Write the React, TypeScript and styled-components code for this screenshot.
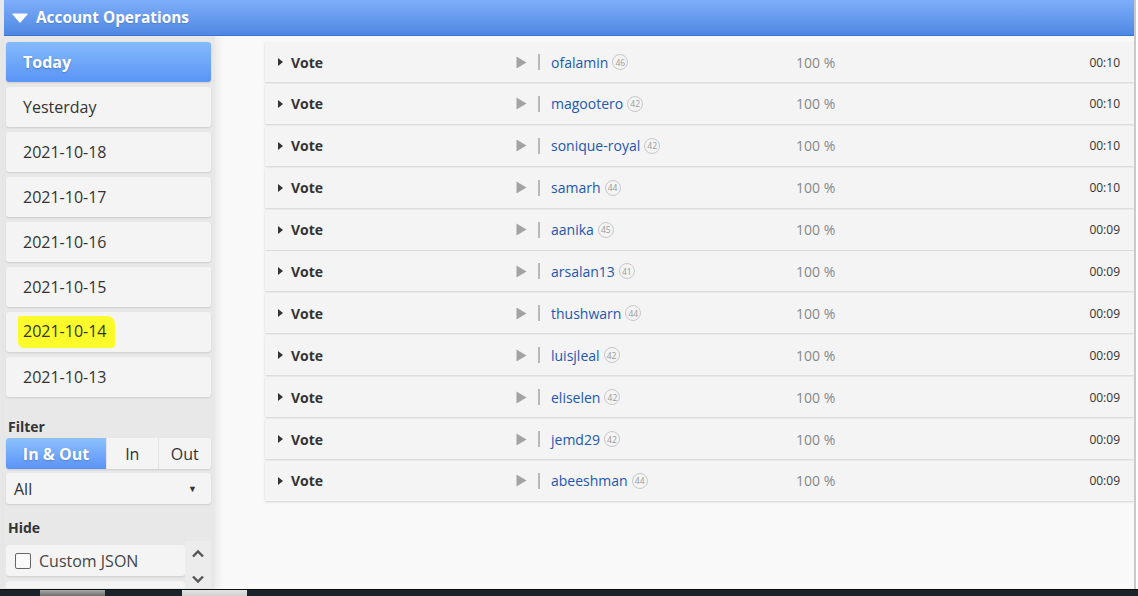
import React from 'react';
import styled, {createGlobalStyle} from "styled-components";

const GlobalStyle = createGlobalStyle`
  html, body {
    margin: 0;
    padding: 0;
    background: #ffffff;
    font-family: "Open Sans", "Liberation Sans", sans-serif;
    overflow: hidden;
  }
`

const Screen = styled.div`
  display: flex;
  flex-direction: column;
  height: 596px;
  width: 1138px;
`

const Window = styled.div`
  flex: 1;
  display: flex;
  flex-direction: column;
  width: 1130px;
  padding-left: 4px;
  background: #e8e8e8;
  border-right: 2px solid #c9c9c9;
  overflow: hidden;
`

const Header = styled.div`
  height: 35px;
  flex-shrink: 0;
  display: flex;
  align-items: center;
  gap: 8px;
  padding-left: 8px;
  background: linear-gradient(#7eaefb, #4f88e2);
  border-bottom: 1px solid #3b72d2;
  color: #fff;
  font-size: 15.4px;
  font-weight: 700;
  text-shadow: 0 1px 1px rgba(0, 0, 0, 0.15);
  position: relative;
  z-index: 2;
`

const Body = styled.div`
  flex: 1;
  display: flex;
  min-height: 0;
`

const Sidebar = styled.div`
  width: 205px;
  padding: 6px 4px 0 2px;
  display: flex;
  flex-direction: column;
  background: #e8e8e8;
  box-shadow: 3px 0 8px rgba(0, 0, 0, 0.07);
  position: relative;
  z-index: 1;
  & > * {
    flex-shrink: 0;
  }
`

const DayButton = styled.div<{ $active?: boolean }>`
  height: 40px;
  margin-bottom: 5px;
  display: flex;
  align-items: center;
  padding-left: 17px;
  border-radius: 3px;
  font-size: 16px;
  background: ${p => p.$active ? "linear-gradient(#85bbfc, #5a94f6)" : "#f4f4f4"};
  color: ${p => p.$active ? "#fff" : "#333"};
  font-weight: ${p => p.$active ? 700 : 400};
  text-shadow: ${p => p.$active ? "0 1px 2px rgba(0,0,0,0.25)" : "none"};
  box-shadow: 0 1px 2px rgba(0, 0, 0, 0.12);
`

const Marker = styled.span`
  background: #fbfb2c;
  padding: 4px 9px 6px 5px;
  margin-left: -5px;
  border-radius: 2px 8px 4px 6px;
`

const Label = styled.div<{ $top: number }>`
  margin-top: ${p => p.$top}px;
  padding-left: 2px;
  font-size: 14px;
  font-weight: 700;
  color: #333;
  height: 18px;
`

const Segmented = styled.div`
  margin-top: 3px;
  display: flex;
  height: 31px;
  border-radius: 3px;
  box-shadow: 0 1px 2px rgba(0, 0, 0, 0.12);
  overflow: hidden;
`

const Segment = styled.div<{ $active?: boolean; $w: number }>`
  width: ${p => p.$w}px;
  display: flex;
  align-items: center;
  justify-content: center;
  font-size: 16px;
  background: ${p => p.$active ? "linear-gradient(#8dc2fd, #5a92f7)" : "#f4f4f4"};
  color: ${p => p.$active ? "#fff" : "#333"};
  font-weight: ${p => p.$active ? 700 : 400};
  text-shadow: ${p => p.$active ? "0 1px 2px rgba(0,0,0,0.2)" : "none"};
  & + & {
    border-left: 1px solid #e2e2e2;
  }
`

const Select = styled.div`
  margin-top: 4px;
  height: 31px;
  display: flex;
  align-items: center;
  justify-content: space-between;
  padding: 0 14px 0 8px;
  background: #f4f4f4;
  border-radius: 3px;
  box-shadow: 0 1px 2px rgba(0, 0, 0, 0.12);
  font-size: 16px;
  color: #333;
`

const Caret = styled.span`
  font-size: 9px;
  color: #333;
`

const HideList = styled.div`
  margin-top: 5px;
  display: flex;
  height: 47px;
  overflow: hidden;
`

const HideItems = styled.div`
  width: 179px;
  padding-top: 4px;
  display: flex;
  flex-direction: column;
  gap: 5px;
`

const CheckRow = styled.div`
  height: 31px;
  flex-shrink: 0;
  display: flex;
  align-items: center;
  gap: 8px;
  padding-left: 9px;
  background: #f4f4f4;
  border-radius: 3px;
  box-shadow: 0 1px 2px rgba(0, 0, 0, 0.12);
  font-size: 16px;
  color: #444;
`

const Box = styled.span`
  width: 14px;
  height: 14px;
  border: 1.5px solid #666;
  border-radius: 2px;
  background: #fafafa;
`

const Scroller = styled.div`
  width: 26px;
  display: flex;
  flex-direction: column;
  align-items: center;
  justify-content: space-between;
  padding: 8px 0 4px;
  background: #ececec;
  color: #555;
`

const Main = styled.div`
  flex: 1;
  padding: 6px 0 0 50px;
  background: #f9f9f9;
  display: flex;
  flex-direction: column;
`

const OpRow = styled.div`
  height: 40px;
  flex-shrink: 0;
  margin-bottom: 1.9px;
  display: flex;
  align-items: center;
  background: #f4f4f4;
  box-shadow: 0 1px 2px rgba(0, 0, 0, 0.16);
  color: #333;
  font-size: 14px;
`

const Expand = styled.span`
  width: 12px;
  margin-left: 13px;
  display: flex;
  align-items: center;
`

const OpType = styled.span`
  width: 225px;
  padding-left: 1px;
  font-weight: 700;
  color: #333;
`

const Play = styled.span`
  width: 22px;
  display: flex;
  align-items: center;
`

const Pipe = styled.span`
  width: 2px;
  height: 16px;
  background: #b9b9b9;
  margin-right: 11px;
`

const Account = styled.span`
  width: 245px;
  display: flex;
  align-items: center;
  gap: 4px;
`

const Name = styled.span`
  color: #2257b0;
`

const Rep = styled.span`
  width: 14px;
  height: 14px;
  border: 1px solid #c8c8c8;
  border-radius: 50%;
  font-size: 8.5px;
  color: #999;
  display: flex;
  align-items: center;
  justify-content: center;
`

const Weight = styled.span`
  flex: 1;
  color: #888;
`

const Time = styled.span`
  font-size: 12px;
  color: #333;
  padding-right: 14px;
`

const Taskbar = styled.div`
  height: 6px;
  display: flex;
  background: #1c222b;
  border-top: 1px solid #0b0d10;
`

const TaskItem = styled.div<{ $w: number; $light?: boolean; $lit?: boolean }>`
  width: ${p => p.$w}px;
  margin-right: 2px;
  background: ${p => p.$lit ? "linear-gradient(#e4e4e4, #cfcfcf)" : p.$light ? "linear-gradient(#a8a8a8, #6e6e6e)" : "transparent"};
`

const days = ["Yesterday", "2021-10-18", "2021-10-17", "2021-10-16", "2021-10-15", "2021-10-14", "2021-10-13"]

const ops = [
    {name: "ofalamin", rep: 46, time: "00:10"},
    {name: "magootero", rep: 42, time: "00:10"},
    {name: "sonique-royal", rep: 42, time: "00:10"},
    {name: "samarh", rep: 44, time: "00:10"},
    {name: "aanika", rep: 45, time: "00:09"},
    {name: "arsalan13", rep: 41, time: "00:09"},
    {name: "thushwarn", rep: 44, time: "00:09"},
    {name: "luisjleal", rep: 42, time: "00:09"},
    {name: "eliselen", rep: 42, time: "00:09"},
    {name: "jemd29", rep: 42, time: "00:09"},
    {name: "abeeshman", rep: 44, time: "00:09"},
]

export default function App() {
    return (
        <>
            <GlobalStyle/>
            <Screen>
                <Window>
                    <Header>
                        <svg width="16" height="10" viewBox="0 0 16 10">
                            <path d="M1 1 L15 1 L8 9 Z" fill="#fff" stroke="#fff" strokeWidth="1.2" strokeLinejoin="round"/>
                        </svg>
                        Account Operations
                    </Header>
                    <Body>
                        <Sidebar>
                            <DayButton $active>Today</DayButton>
                            {days.map(d => (
                                <DayButton key={d}>
                                    {d === "2021-10-14" ? <Marker>{d}</Marker> : d}
                                </DayButton>
                            ))}
                            <Label $top={15}>Filter</Label>
                            <Segmented>
                                <Segment $active $w={101}>In &amp; Out</Segment>
                                <Segment $w={51}>In</Segment>
                                <Segment $w={53}>Out</Segment>
                            </Segmented>
                            <Select>
                                All
                                <Caret>▼</Caret>
                            </Select>
                            <Label $top={14}>Hide</Label>
                            <HideList>
                                <HideItems>
                                    <CheckRow><Box/>Custom JSON</CheckRow>
                                    <CheckRow><Box/></CheckRow>
                                </HideItems>
                                <Scroller>
                                    <svg width="14" height="9" viewBox="0 0 14 9">
                                        <path d="M2 7.5 L7 2.5 L12 7.5" fill="none" stroke="#555" strokeWidth="2.4"/>
                                    </svg>
                                    <svg width="14" height="9" viewBox="0 0 14 9">
                                        <path d="M2 1.5 L7 6.5 L12 1.5" fill="none" stroke="#555" strokeWidth="2.4"/>
                                    </svg>
                                </Scroller>
                            </HideList>
                        </Sidebar>
                        <Main>
                            {ops.map(op => (
                                <OpRow key={op.name}>
                                    <Expand>
                                        <svg width="5" height="8" viewBox="0 0 5 8">
                                            <path d="M0 0 L5 4 L0 8 Z" fill="#333"/>
                                        </svg>
                                    </Expand>
                                    <OpType>Vote</OpType>
                                    <Play>
                                        <svg width="11" height="13" viewBox="0 0 11 13">
                                            <path d="M0.5 0.5 L10.5 6.5 L0.5 12.5 Z" fill="#a3a3a3"/>
                                        </svg>
                                    </Play>
                                    <Pipe/>
                                    <Account>
                                        <Name>{op.name}</Name>
                                        <Rep>{op.rep}</Rep>
                                    </Account>
                                    <Weight>100 %</Weight>
                                    <Time>{op.time}</Time>
                                </OpRow>
                            ))}
                        </Main>
                    </Body>
                </Window>
                <Taskbar>
                    <TaskItem $w={38}/>
                    <TaskItem $w={65} $light/>
                    <TaskItem $w={73}/>
                    <TaskItem $w={65} $lit/>
                </Taskbar>
            </Screen>
        </>
    )
}
